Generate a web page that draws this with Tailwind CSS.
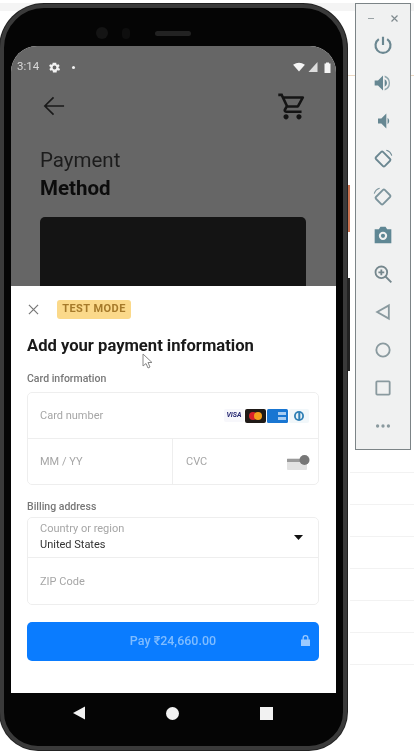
<!doctype html>
<html>
<head>
<meta charset="utf-8">
<script src="https://cdn.jsdelivr.net/npm/@tailwindcss/browser@4"></script>
</head>
<body class="bg-white font-['Roboto',sans-serif]">
<div class="relative w-[414px] h-[751px] overflow-hidden bg-white blur-[0.5px]">
  <!-- desktop behind -->
  <div class="absolute left-0 top-0 w-full h-[11px] bg-[#f4f4f4] border-t-[3px] border-white"></div>
  <div class="absolute left-[340px] top-[75px] w-[74px] h-px bg-[#ecd9c4]"></div>
  <div class="absolute left-[347px] top-[185px] w-[3px] h-[47px] bg-[#c9714f]"></div>
  <div class="absolute left-[347px] top-[278px] w-[3px] h-[93px] bg-[#222]"></div>
  <div class="absolute left-[350px] top-[472px] w-[64px] flex flex-col gap-[31px]">
    <div class="h-px bg-[#f2f2f2]"></div><div class="h-px bg-[#f2f2f2]"></div><div class="h-px bg-[#f2f2f2]"></div><div class="h-px bg-[#f2f2f2]"></div><div class="h-px bg-[#f2f2f2]"></div><div class="h-px bg-[#f2f2f2]"></div><div class="h-px bg-[#f2f2f2]"></div>
  </div>

  <!-- phone -->
  <div class="absolute left-0 top-[4px] w-[347px] h-[746px] rounded-t-[44px] rounded-b-[38px] bg-[#050505] border-[4px] border-[#3a3a3a] ring-1 ring-[#222] px-[7px] flex flex-col">
    <!-- top bezel -->
    <div class="relative h-[38px] shrink-0">
      <div class="absolute left-[85px] top-[19px] w-[12px] h-[12px] rounded-full bg-[#141414]"></div>
      <div class="absolute left-[111px] top-[20px] w-[8px] h-[11px] rounded-sm bg-[#0e0e0e]"></div>
      <div class="absolute left-[144px] top-[23px] w-[36px] h-[5px] rounded-full bg-[#222]"></div>
    </div>
    <!-- screen -->
    <div class="w-[325px] h-[647px] shrink-0 rounded-t-[26px] overflow-hidden flex flex-col bg-white">
      <!-- dimmed app -->
      <div class="h-[240px] shrink-0 bg-[#666666] flex flex-col overflow-hidden">
        <div class="h-[22px] mt-[10px] shrink-0 px-[6px] flex items-center text-[#d8d8d8] text-[11.500px]">
          <span class="w-[24px]">3:14</span>
          <svg class="ml-[7px]" width="13" height="13" viewBox="0 0 24 24" fill="#f2f2f2"><path d="M19.400 13c.1-.3.1-.6.1-1s0-.7-.1-1l2.100-1.600-2-3.500-2.500 1a7 7 0 0 0-1.700-1L15.400 3h-6.800l-.4 2.900c-.6.2-1.200.6-1.700 1l-2.500-1-2 3.500L4.600 11c-.1.3-.1.600-.1 1s0 .7.100 1l-2.100 1.600 2 3.500 2.500-1c.5.4 1.100.8 1.700 1l.4 2.900h6.800l.4-2.900c.6-.2 1.200-.6 1.700-1l2.500 1 2-3.500zM12 15.500a3.500 3.500 0 1 1 0-7 3.500 3.500 0 0 1 0 7z"/></svg>
          <span class="ml-[11px] w-[3px] h-[3px] rounded-full bg-[#f2f2f2]"></span>
          <span class="ml-auto flex items-center gap-[3px] mr-[-1px]">
            <svg width="12" height="10" viewBox="0 0 13 11" fill="#f5f5f5"><path d="M0 3 Q6.500 -1.500 13 3 L6.500 10.500 Z"/></svg>
            <svg width="10" height="10" viewBox="0 0 9 10" fill="#ddd"><path d="M9 0 V10 H0 Z"/></svg>
            <svg class="ml-[3px]" width="7" height="11" viewBox="0 0 6 11" fill="#f5f5f5"><path d="M1.500 0.500h3V1.500H6V11H0V1.500h1.500z"/></svg>
          </span>
        </div>
        <div class="flex justify-between items-center pl-[32px] pr-[29px] mt-[8px] h-[40px] shrink-0">
          <svg width="22" height="22" viewBox="0 0 24 24" fill="none" stroke="#1a1a1a" stroke-width="1.800"><path d="M23 12H2M11.500 2.500 2 12l9.500 9.500"/></svg>
          <svg class="mr-[-1px]" width="31" height="31" viewBox="0 0 24 24" fill="#141414"><path d="M15.550 13c.75 0 1.410-.41 1.750-1.030l3.580-6.490A.996.996 0 0 0 20.010 4H5.210l-.94-2H1v2h2l3.600 7.590-1.350 2.440C4.520 15.370 5.480 17 7 17h12v-2H7l1.100-2h7.450zM6.160 6h12.150l-2.760 5H8.530L6.160 6zM7 18c-1.100 0-1.990.9-1.990 2S5.900 22 7 22s2-.9 2-2-.9-2-2-2zm10 0c-1.100 0-1.990.9-1.990 2s.89 2 1.990 2 2-.9 2-2-.9-2-2-2z"/></svg>
        </div>
        <div class="pl-[29px] mt-[20px] text-[20.500px] leading-[28px] text-[#1c1c1c]">
          <div>Payment</div>
          <div class="font-bold text-[#0c0c0c]">Method</div>
        </div>
        <div class="ml-[29px] mt-[15px] w-[266px] h-[80px] shrink-0 rounded-[5px] bg-[#141414]"></div>
      </div>
      <!-- sheet -->
      <div class="flex-1 bg-white px-[16px] flex flex-col">
        <div class="flex items-center h-[19px] mt-[14px] shrink-0">
          <svg class="ml-[1px]" width="11" height="11" viewBox="0 0 12 12" fill="none" stroke="#777" stroke-width="1.300"><path d="M1 1l10 10M11 1 1 11"/></svg>
          <span class="ml-[18px] w-[74px] h-[19px] rounded-[3px] bg-[#fbd98a] text-[#a67a2a] text-[11px] font-bold flex items-center justify-center tracking-[0.45px]">TEST MODE</span>
        </div>
        <h1 class="mt-[16px] text-[#1a1a1a] text-[16.600px] leading-[22px] font-bold">Add your payment information</h1>
        <div class="mt-[15px] text-[#777] text-[10.500px] leading-[14px] font-medium">Card information</div>
        <!-- card box -->
        <div class="mt-[6px] w-[292px] h-[93px] shrink-0 rounded-[5px] border border-[#eeeeee] flex flex-col text-[#a6a6a6] text-[11px]">
          <div class="h-[46px] shrink-0 border-b border-[#eeeeee] pl-[12px] pr-[9px] flex items-center justify-between">
            <span class="pt-[1px]">Card number</span>
            <span class="flex items-center gap-[1px]">
              <span class="w-[20px] h-[13px] rounded-[2px] bg-[#f7f7fb] text-[#2a2c74] text-[7px] font-bold italic flex items-center justify-center">VISA</span>
              <svg width="21" height="14" viewBox="0 0 21 14"><rect width="21" height="14" rx="2" fill="#1f1a17"/><circle cx="8" cy="7" r="4" fill="#d8232a"/><circle cx="13" cy="7" r="4" fill="#f4a01d"/></svg>
              <svg width="21" height="14" viewBox="0 0 21 14"><rect width="21" height="14" rx="1.500" fill="#1976d2"/><rect x="11" y="3" width="8" height="3" fill="#a9cdf2"/><rect x="11" y="8" width="8" height="3" fill="#a9cdf2"/></svg>
              <svg width="20" height="14" viewBox="0 0 20 14"><rect width="20" height="14" rx="2" fill="#f1f7fa"/><circle cx="10" cy="7" r="5" fill="#2f7fb5"/><circle cx="10" cy="7" r="3.200" fill="#e6f2f8"/><rect x="9.300" y="3" width="2" height="8" fill="#2f7fb5"/></svg>
            </span>
          </div>
          <div class="flex-1 flex">
            <div class="w-[145px] border-r border-[#eeeeee] pl-[12px] flex items-center pt-[2px]">MM / YY</div>
            <div class="flex-1 pl-[13px] pr-[8px] flex items-center justify-between pt-[1px]">
              <span class="pt-[1px]">CVC</span>
              <svg width="23" height="15" viewBox="0 0 23 15"><rect x="0" y="3" width="20" height="12" rx="1" fill="#e2e2e2"/><rect x="0" y="4" width="20" height="3" fill="#9a9a9a"/><circle cx="17.500" cy="5" r="5" fill="#777"/></svg>
            </div>
          </div>
        </div>
        <div class="mt-[15px] text-[#777] text-[10.500px] leading-[14px] font-medium">Billing address</div>
        <!-- billing box -->
        <div class="mt-[3px] w-[292px] h-[88px] shrink-0 rounded-[5px] border border-[#eeeeee] flex flex-col text-[11px]">
          <div class="h-[40px] shrink-0 border-b border-[#eeeeee] pl-[12px] pr-[15px] flex items-center justify-between">
            <div class="flex flex-col leading-[15.500px] mt-[-2px]">
              <span class="text-[#a6a6a6]">Country or region</span>
              <span class="text-[#333]">United States</span>
            </div>
            <svg width="9" height="5" viewBox="0 0 9 5" fill="#111"><path d="M0 0h9L4.500 5z"/></svg>
          </div>
          <div class="flex-1 pl-[12px] flex items-center text-[#a6a6a6] pt-[3px]">ZIP Code</div>
        </div>
        <!-- pay button -->
        <div class="relative mt-[17px] w-[292px] h-[39px] shrink-0 rounded-[5px] bg-[#0a7cff] text-[#7fbcff] text-[12.500px] font-medium flex items-center justify-center">
          Pay ₹24,660.00
          <svg class="absolute right-[9px] top-[13px]" width="9" height="11" viewBox="0 0 9 11" fill="#9ccaff"><path d="M1.500 4.500V3a3 3 0 0 1 6 0v1.500H9V11H0V4.500zM2.800 4.500h3.400V3a1.700 1.700 0 0 0-3.400 0z"/></svg>
        </div>
      </div>
    </div>
    <!-- nav bar -->
    <div class="flex-1 relative flex items-start">
      <div class="w-[325px] h-[40px] flex items-center justify-between pl-[62px] pr-[63px]">
        <svg width="12" height="14" viewBox="0 0 12 13" fill="#f2f2f2"><path d="M12 0V13L0 6.500z"/></svg>
        <span class="w-[13px] h-[13px] rounded-full bg-[#f2f2f2]"></span>
        <span class="w-[13px] h-[13px] bg-[#f2f2f2]"></span>
      </div>
    </div>
  </div>

  <!-- mouse cursor -->
  <svg class="absolute left-[142px] top-[353px]" width="12" height="17" viewBox="0 0 12 17" fill="#fff" stroke="#888" stroke-width="1"><path d="M1 1v12l3-2.500 2 4.500 2-1-2-4.500h4z"/></svg>

  <!-- emulator toolbar -->
  <div class="absolute left-[355px] top-[3px] w-[56px] h-[447px] bg-[#f0f1f1] border border-[#7c8487] flex flex-col items-center pt-[8px]">
    <div class="w-full h-[12px] flex justify-between items-center pl-[11px] pr-[12px] text-[#8c9699]">
      <span class="w-[6px] h-px bg-[#9aa3a6] ml-[1px]"></span>
      <svg width="7" height="7" viewBox="0 0 7 7" stroke="#7f8a8e" stroke-width="1.200"><path d="M0.500 0.500l6 6M6.500 0.500l-6 6"/></svg>
    </div>
    <div class="flex flex-col items-center gap-[18.100px] mt-[11px]">
      <svg width="20" height="20" viewBox="0 0 24 24" fill="none" stroke="#6b8791" stroke-width="2.600"><path d="M12 2v10M7 5a9 9 0 1 0 10 0"/></svg>
      <svg width="20" height="20" viewBox="0 0 24 24" fill="#668792"><path d="M2 9v6h4l6 6V3L6 9z"/><path d="M14 7.500a5 5 0 0 1 0 9z"/><path d="M14 3v2a7.500 7.500 0 0 1 0 14v2a9.500 9.500 0 0 0 0-18z" opacity=".7"/></svg>
      <svg width="20" height="20" viewBox="0 0 24 24" fill="#668792"><path d="M6 9v6h4l6 6V3l-6 6z"/><path d="M17.500 8a5 5 0 0 1 0 8z"/></svg>
      <svg width="20" height="20" viewBox="0 0 24 24" fill="none" stroke="#6b8791" stroke-width="2.200"><rect x="6" y="4.500" width="12" height="15" rx="1.500" transform="rotate(-45 12 12)"/><path d="M16 1.500a9.500 9.500 0 0 1 6.500 6.500" stroke-width="1.300"/></svg>
      <svg width="20" height="20" viewBox="0 0 24 24" fill="none" stroke="#7c949c" stroke-width="2.200"><rect x="6" y="4.500" width="12" height="15" rx="1.500" transform="rotate(45 12 12)"/><path d="M8 1.500a9.500 9.500 0 0 0-6.500 6.500" stroke-width="1.300"/></svg>
      <svg width="20" height="20" viewBox="0 0 24 24" fill="#5f8794"><path fill-rule="evenodd" d="M2 5h5l2-3h6l2 3h5v17H2zM12 8a5 5 0 1 0 0 10 5 5 0 0 0 0-10zm0 2.500a2.500 2.500 0 1 1 0 5 2.500 2.500 0 0 1 0-5z"/></svg>
      <svg width="20" height="20" viewBox="0 0 24 24" fill="none" stroke="#75878d" stroke-width="2.200"><circle cx="10" cy="10" r="7"/><path d="M15 15l7 7M10 6.500v7M6.500 10h7"/></svg>
      <svg width="20" height="20" viewBox="0 0 24 24" fill="none" stroke="#8a9a9f" stroke-width="2.200"><path d="M19 4v16L5 12z"/></svg>
      <svg width="20" height="20" viewBox="0 0 24 24" fill="none" stroke="#8a9a9f" stroke-width="2.200"><circle cx="12" cy="12" r="8"/></svg>
      <svg width="20" height="20" viewBox="0 0 24 24" fill="none" stroke="#8a9a9f" stroke-width="2.200"><rect x="4" y="4" width="16" height="16" rx="1"/></svg>
      <svg width="20" height="20" viewBox="0 0 24 24" fill="#8a9a9f"><circle cx="5.500" cy="12" r="2"/><circle cx="12" cy="12" r="2"/><circle cx="18.500" cy="12" r="2"/></svg>
    </div>
  </div>
</div>
</body>
</html>
